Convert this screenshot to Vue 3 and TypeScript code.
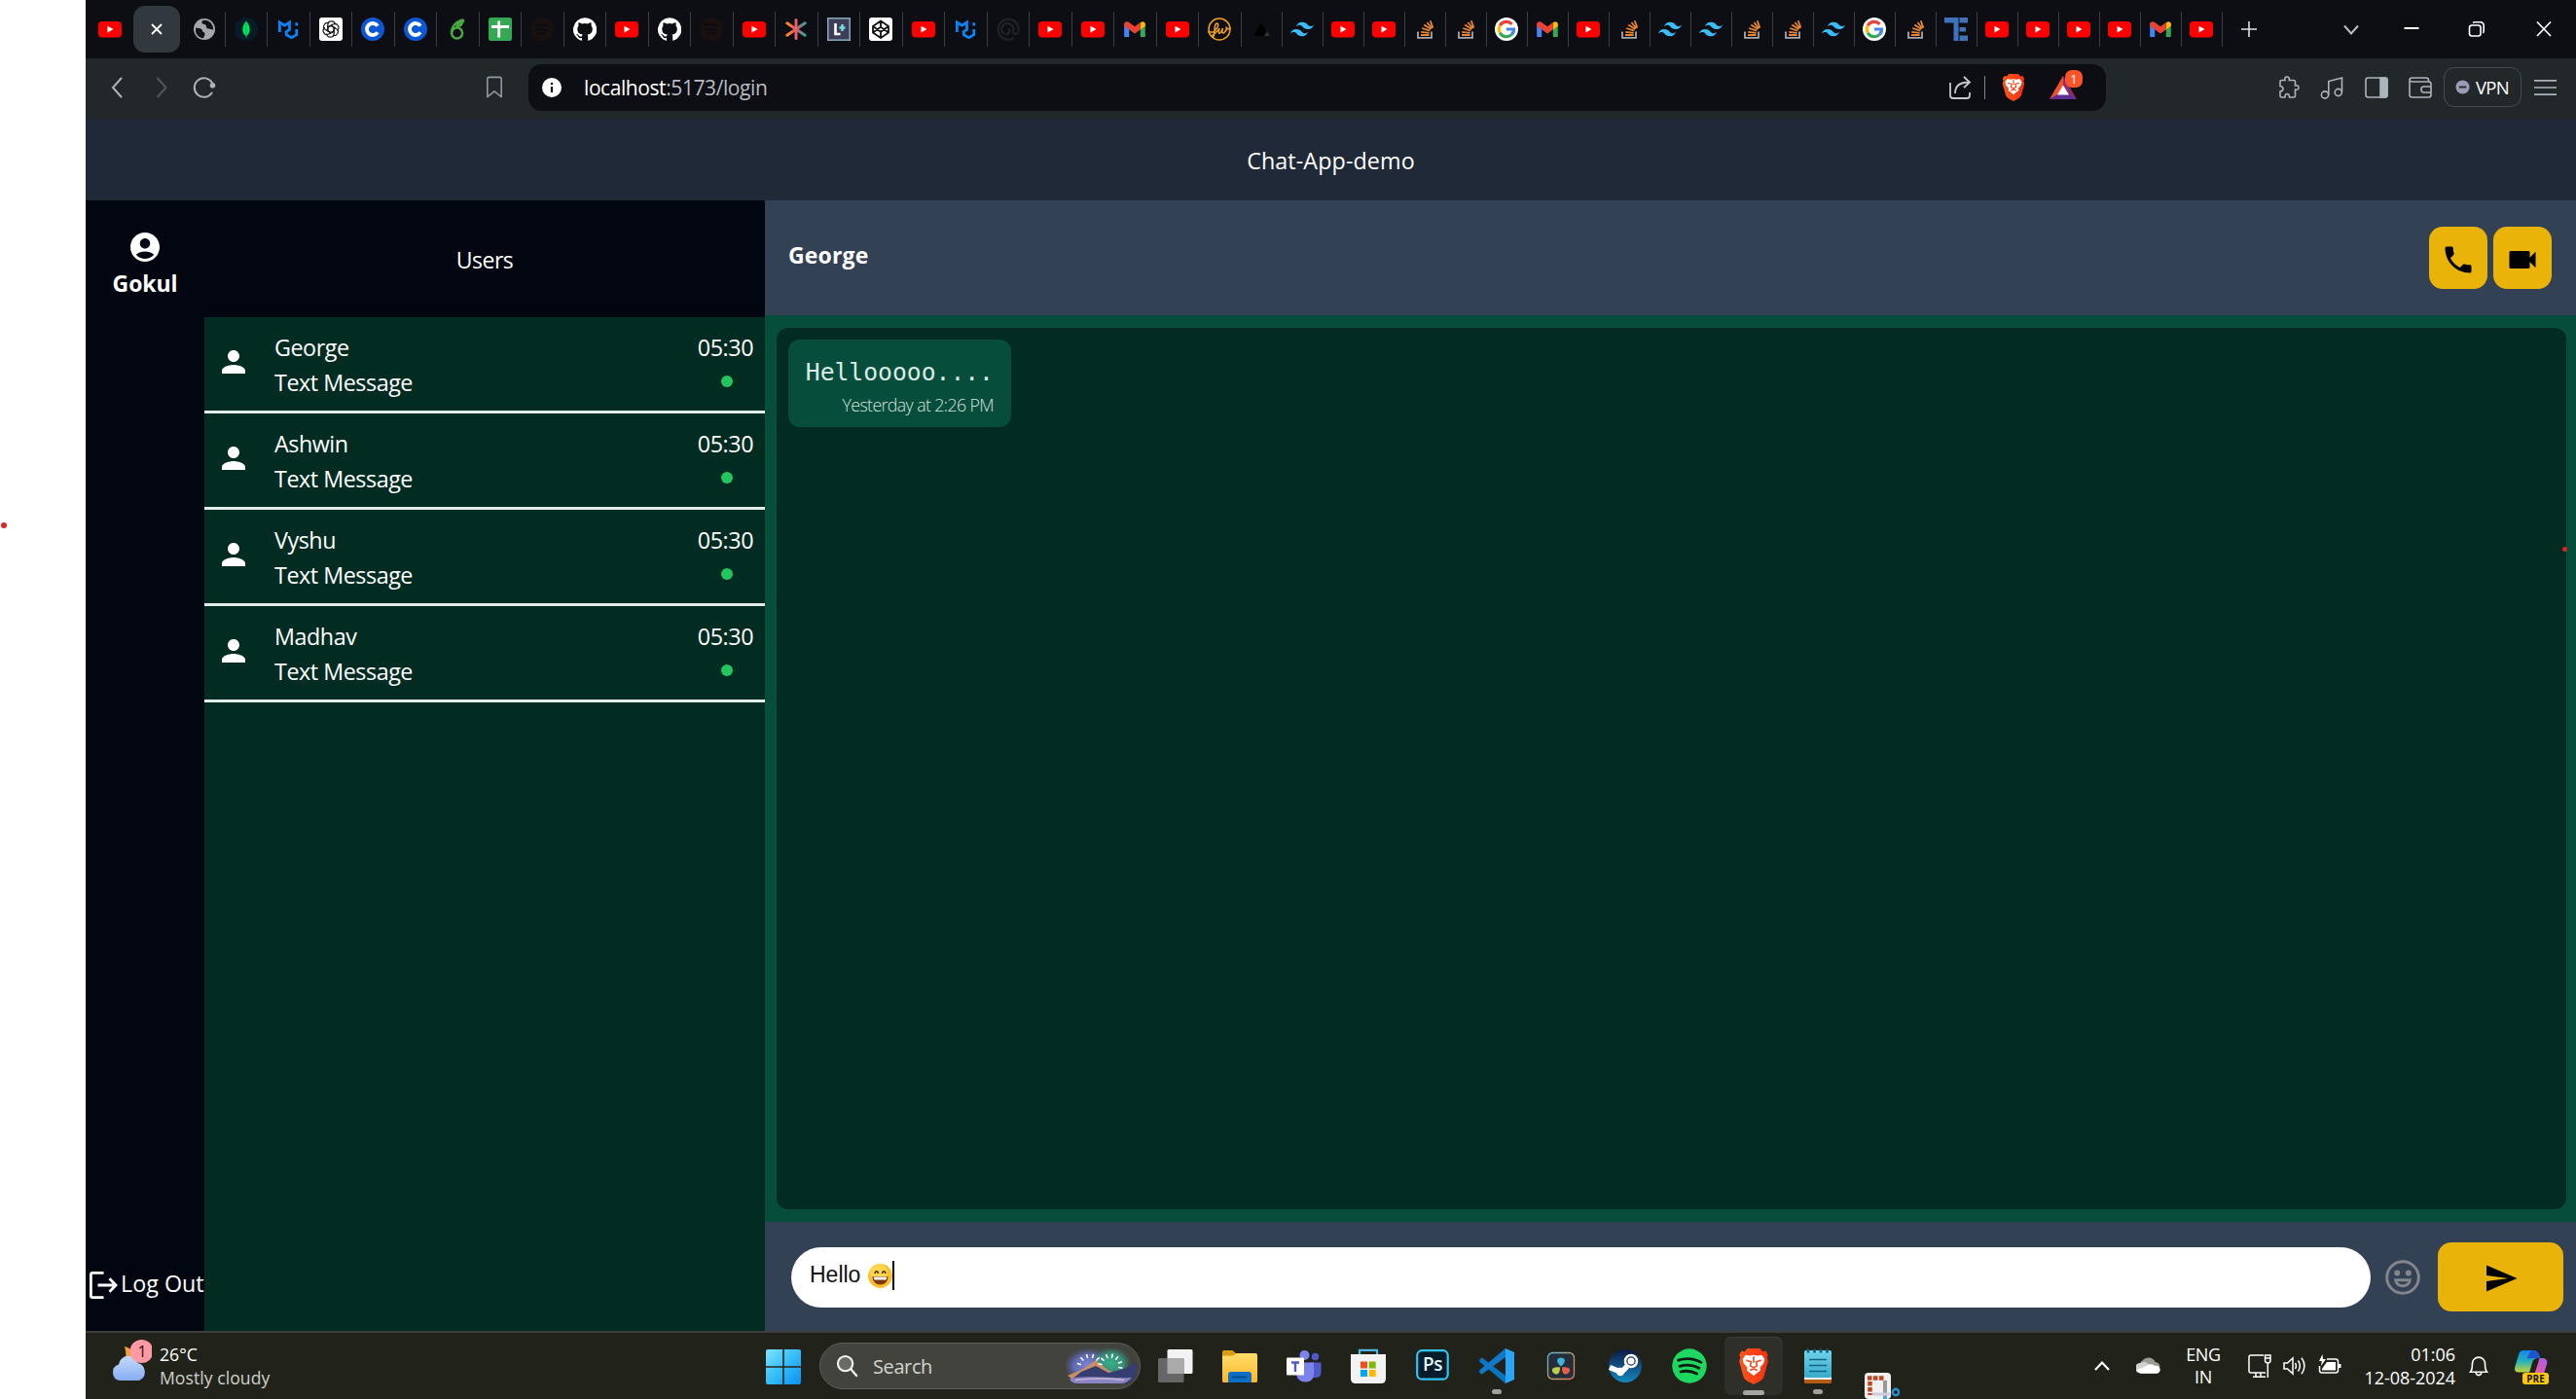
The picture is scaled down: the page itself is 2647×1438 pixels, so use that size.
<script setup lang="ts">
interface User {
  name: string
  message: string
  time: string
}

const wideTabs: string[] = [
  'mongo', 'mui', 'gpt', 'coursera', 'coursera', 'six', 'sheets', 'dim', 'github', 'yt', 'github', 'dim', 'yt',
  'spark', 'lplus', 'codepen', 'yt', 'mui', 'dimq', 'yt', 'yt', 'gmail', 'yt', 'fw',
]
const narrowTabs: string[] = [
  'vercel', 'tw', 'yt', 'yt', 'so', 'so', 'google', 'gmail', 'yt', 'so', 'tw', 'tw', 'so', 'so', 'tw', 'google', 'so',
  'te', 'yt', 'yt', 'yt', 'yt', 'gmail', 'yt',
]
const users: User[] = ['George', 'Ashwin', 'Vyshu', 'Madhav'].map((name) => ({
  name,
  message: 'Text Message',
  time: '05:30',
}))
const apps: { icon: string; state?: string; label?: string }[] = [
  { icon: 'taskview' }, { icon: 'explorer' }, { icon: 'teams' }, { icon: 'store' }, { icon: 'ps', label: 'Ps' },
  { icon: 'vscode', state: 'open' }, { icon: 'davinci' }, { icon: 'steam' }, { icon: 'spotify' },
  { icon: 'brave', state: 'active' }, { icon: 'notepad', state: 'open' }, { icon: 'snip' },
]
</script>

<template>
  <svg class="defs" width="0" height="0">
    <defs>
      <linearGradient id="gWin" x1="0" y1="0" x2="1" y2="1"><stop offset="0" stop-color="#7fe3ff" /><stop offset=".5" stop-color="#35bdf8" /><stop offset="1" stop-color="#0a90f5" /></linearGradient>
      <linearGradient id="gFold" x1="0" y1="0" x2="0" y2="1"><stop offset="0" stop-color="#ffdc6b" /><stop offset="1" stop-color="#fbb829" /></linearGradient>
      <linearGradient id="gBrave" x1="0" y1="0" x2="1" y2="0"><stop offset="0" stop-color="#f8571d" /><stop offset="1" stop-color="#f5300f" /></linearGradient>
      <linearGradient id="gSteam" x1="0" y1="0" x2="0" y2="1"><stop offset="0" stop-color="#0f1845" /><stop offset="1" stop-color="#1488bf" /></linearGradient>
      <linearGradient id="gNote" x1="0" y1="0" x2="0" y2="1"><stop offset="0" stop-color="#6fd3ea" /><stop offset="1" stop-color="#38aacb" /></linearGradient>
      <linearGradient id="gSpark" x1="0" y1="0" x2="1" y2="0"><stop offset="0" stop-color="#ff8a1e" /><stop offset=".5" stop-color="#e5506a" /><stop offset="1" stop-color="#35a7a0" /></linearGradient>
      <linearGradient id="gDav" x1="0" y1="0" x2="1" y2="1"><stop offset="0" stop-color="#57b9d6" /><stop offset=".5" stop-color="#b0a070" /><stop offset="1" stop-color="#e07a5c" /></linearGradient>
      <linearGradient id="gCloud" x1="0" y1="0" x2="0" y2="1"><stop offset="0" stop-color="#c5dafb" /><stop offset="1" stop-color="#86adf2" /></linearGradient>
      <linearGradient id="gCop1" x1="0" y1="0" x2="0" y2="1"><stop offset="0" stop-color="#1583ee" /><stop offset=".5" stop-color="#24b2b8" /><stop offset="1" stop-color="#c5d43a" /></linearGradient>
      <linearGradient id="gCop2" x1="1" y1="0" x2="0" y2="1"><stop offset="0" stop-color="#a35cf0" /><stop offset=".5" stop-color="#d65bb8" /><stop offset="1" stop-color="#ff7a5c" /></linearGradient>
      <radialGradient id="gBlue"><stop offset="0" stop-color="#7c86dc" /><stop offset=".6" stop-color="#666fc0" stop-opacity=".9" /><stop offset="1" stop-color="#565ca0" stop-opacity="0" /></radialGradient>
      <radialGradient id="gGreen"><stop offset="0" stop-color="#35b388" /><stop offset=".6" stop-color="#36937c" stop-opacity=".9" /><stop offset="1" stop-color="#3a6e68" stop-opacity="0" /></radialGradient>
    </defs>
    <symbol id="yt" viewBox="0 0 24 24"><rect y="4" width="24" height="16.4" rx="4" fill="#f00" /><path d="M9.500 8.800v6.600l6-3.300z" fill="#fff" /></symbol>
    <symbol id="globe" viewBox="0 0 24 24"><circle cx="12" cy="12" r="11" fill="#a3a6aa" /><path d="M3.500 10.500c4 .6 6.500 1.200 6.500 3s2.500 1 2.500 3.500-1.500 2.500-1.500 4.200C6 21 1.500 16 3.500 10.500zM11.500 2.800c-3.500 1-2.500 4 .5 4.200s1 3.500 3.500 4.500 3.500 0 5.700 1.300C21.500 7 17 2.300 11.500 2.800z" fill="#111217" /></symbol>
    <symbol id="mongo" viewBox="0 0 24 24"><circle cx="12" cy="12" r="12" fill="#071c26" /><path d="M12 3.500c5 6 4.500 12.500.4 15.500l-.1 2h-.6l-.1-2C7.400 16 7 9.500 12 3.500z" fill="#00e85d" /><path d="M12 4v15" stroke="#00a54a" stroke-width=".8" /></symbol>
    <symbol id="mui" viewBox="0 0 24 24"><path d="M3.400 15V5l5.100 3.200L13.500 5v7.500l-3.200 2v3.200l5.200 2.900 5.300-3v-5.500m0-3.600V5.300" fill="none" stroke="#0a84f5" stroke-width="2.800" /></symbol>
    <symbol id="gpt" viewBox="0 0 24 24"><rect width="24" height="24" rx="3" fill="#fff" /><g fill="none" stroke="#222" stroke-width="1.200"><path v-for="a in [0, 60, 120, 180, 240, 300]" :key="a" :transform="`rotate(${a} 12 12)`" d="M8.800 13.800V7.600c0-5 7.300-5 7.500-.2M8.800 10.200 12 8.300l5 2.900" /></g></symbol>
    <symbol id="coursera" viewBox="0 0 24 24"><circle cx="12" cy="12" r="12" fill="#0b57d6" /><path d="M17 8.700a6 6 0 1 0 0 6.600" fill="none" stroke="#fff" stroke-width="3.800" /></symbol>
    <symbol id="six" viewBox="0 0 24 24"><g fill="none" stroke="#48a943" stroke-width="2.500"><circle cx="11.600" cy="16" r="5.500" /><path d="M6 16C6 9 11 3.500 18.500 2.500M11 7.500l7.500-5-3 5.500-5 1.500" /></g></symbol>
    <symbol id="sheets" viewBox="0 0 24 24"><rect width="24" height="24" rx="2.500" fill="#34a853" /><path d="M10.700 3.500v17M3 9.500h18" stroke="#fff" stroke-width="2.800" /></symbol>
    <symbol id="dim" viewBox="0 0 24 24"><circle cx="12" cy="12" r="12" fill="#18110f" /><path d="M5 8c5-1.500 10-1 14 1M6 12.500c4-1 8-.8 12 1M7 16.500c3-.8 6-.5 9 1" fill="none" stroke="#0d0d11" stroke-width="2" /></symbol>
    <symbol id="dimq" viewBox="0 0 24 24"><path d="M18 21a10.500 10.500 0 1 1 4.500-6.500M8 17a6 6 0 1 1 9-3c-.5 2.500 2 4 5 2M9 17.500c4 0 5-3.500 3.500-6.500" fill="none" stroke="#23242b" stroke-width="2" /></symbol>
    <symbol id="github" viewBox="0 0 24 24"><path d="M12 .3a12 12 0 0 0-3.800 23.400c.6.100.8-.3.800-.6v-2c-3.300.7-4-1.600-4-1.600-.6-1.400-1.400-1.800-1.400-1.800-1-.7.1-.7.1-.7 1.200.1 1.900 1.200 1.900 1.200 1 1.800 2.800 1.300 3.500 1 .1-.8.400-1.300.7-1.600-2.700-.3-5.500-1.300-5.500-6 0-1.200.5-2.300 1.300-3.100-.2-.4-.6-1.600 0-3.200 0 0 1-.3 3.400 1.200a11.500 11.500 0 0 1 6 0c2.300-1.500 3.300-1.200 3.300-1.200.7 1.600.3 2.800.2 3.200.8.800 1.300 1.900 1.300 3.200 0 4.600-2.800 5.600-5.500 5.900.5.400.9 1.100.9 2.200v3.300c0 .3.100.7.800.6A12 12 0 0 0 12 .3" fill="#fff" /></symbol>
    <symbol id="spark" viewBox="0 0 24 24"><path d="M2.800 5.800l18.400 12.400M21.200 5.800 2.800 18.200" stroke="url(#gSpark)" stroke-width="3" stroke-linecap="round" /><path d="M12 2.500v19" stroke="#e4606a" stroke-width="3" stroke-linecap="round" /></symbol>
    <symbol id="lplus" viewBox="0 0 24 24"><rect x=".8" y=".8" width="22.400" height="22.400" fill="#3e3d59" stroke="#7fa6b4" stroke-width="1.600" /><path d="M8.500 6v11h5" fill="none" stroke="#fff" stroke-width="2.600" /><path d="M15.500 7v7M12.500 10.500h6" stroke="#72dede" stroke-width="2.400" /></symbol>
    <symbol id="codepen" viewBox="0 0 24 24"><rect width="24" height="24" rx="3" fill="#fff" /><path d="M12 3.500 20 9v6.500L12 21l-8-5.500V9zM4 9l8 5.800L20 9M4 15.500l8-5.700 8 5.700M12 3.500v6.300M12 21v-6.200" fill="none" stroke="#111" stroke-width="1.800" stroke-linejoin="round" /></symbol>
    <symbol id="gmail" viewBox="0 0 24 24"><path d="M1.200 20V6l5 3.600V20z" fill="#4285f4" /><path d="M22.800 20V6l-5 3.600V20z" fill="#34a853" /><path d="M17.800 5.300 20 4.200q2.800 0 2.800 3v1.500l-5 3.800z" fill="#fbbc04" /><path d="M1.200 8.700V7c0-3 3-3.600 5-2L12 9.200l5.800-4.200v7.400L12 16.600z" fill="#ea4335" /></symbol>
    <symbol id="fw" viewBox="0 0 24 24"><g fill="none" stroke="#f0a11e" stroke-width="1.500"><circle cx="12" cy="12" r="11" /><path d="M0 15h5.500c3-2 6-6 5-8.500-1-1.500-3 0-3.200 3L6.500 18c-.3 2.500-2.500 2-1.500.5 1.500-2 5-3.500 7-7.500-1.500 5-.5 6 1.500 4.500l2-4.500c-1.500 5 0 6 2 4s2.500-3.500 1.500-5.500c0 2.500 2 3 4.500 1.500" /></g></symbol>
    <symbol id="vercel" viewBox="0 0 24 24"><path d="m12 5 8 14H4z" fill="#000" /><path d="m18 14 3 5h-6z" fill="#333" /></symbol>
    <symbol id="tw" viewBox="0 0 24 24"><path d="M12 4.800c-3.200 0-5.200 1.600-6 4.800 1.200-1.600 2.600-2.200 4.200-1.800.9.200 1.600.9 2.300 1.700C13.700 10.700 15 12 18 12c3.200 0 5.200-1.600 6-4.800-1.200 1.600-2.600 2.200-4.200 1.800-.9-.2-1.600-.9-2.300-1.700C16.300 6.100 15 4.800 12 4.800zM6 12c-3.200 0-5.200 1.600-6 4.800 1.200-1.600 2.600-2.200 4.200-1.800.9.200 1.600.9 2.300 1.700C7.700 17.900 9 19.200 12 19.200c3.200 0 5.200-1.600 6-4.800-1.200 1.600-2.600 2.200-4.200 1.800-.9-.2-1.600-.9-2.300-1.700C10.300 13.300 9 12 6 12z" fill="#38bdf8" /></symbol>
    <symbol id="so" viewBox="0 0 24 24"><path d="M5 14.500v6.300h14v-6.300" fill="none" stroke="#a5a9ad" stroke-width="1.800" /><path d="M8 18h8.500M8.200 14.800l8.400 1M9.200 11l8 2.600M11.300 7.400l7 4.700M14.400 5l5 6.300M17.700 3.200l2.700 7.400" stroke="#e8852e" stroke-width="1.800" /></symbol>
    <symbol id="google" viewBox="0 0 24 24"><circle cx="12" cy="12" r="12" fill="#fff" /><g fill="none" stroke-width="3.200"><path d="M5.300 8.300A7.600 7.600 0 0 1 17.500 6.800" stroke="#ea4335" /><path d="M5.300 8.300a7.800 7.800 0 0 0 0 7.400" stroke="#fbbc04" /><path d="M5.300 15.700a7.600 7.600 0 0 0 11.900 2" stroke="#34a853" /><path d="M17.200 17.700c1.700-1.600 2.400-3.600 2.300-5.700H12" stroke="#4285f4" /></g></symbol>
    <symbol id="te" viewBox="0 0 24 24"><path d="M0 0h14.500v5.500H0zM9.500 0h5v24h-5zM15.500 0H24v5.500h-8.500zM15.500 10H22v4.500h-6.500zM15.500 18.500H24V24h-8.500z" fill="#3f72b8" /></symbol>
    <symbol id="brave" viewBox="0 0 24 28.800"><path d="M7 0h10l2.200 2.600 2.500-.6 1.800 3.200-.8 2.200.9 2.800-3.300 12c-.7 2.500-2 3.500-8.300 6.600C5.700 25.700 4.400 24.700 3.700 22.200L.4 10.200l.9-2.800-.8-2.200L2.300 2l2.500.6z" fill="url(#gBrave)" /><path d="m12 5.300 3 .6 3.500-.7 2.300 3.300-.8 3.300-3 3.500.6 2.300-2.600 1.800L12 21.800 9 19.400l-2.600-1.800.6-2.300-3-3.500-.8-3.300 2.300-3.300 3.500.7z" fill="#fff" /><path d="M6 9.500l4 1.200-.7 3.200 2.700 1.600 2.700-1.600-.7-3.200 4-1.200M12 6.500v5M9 17.500l3-1.200 3 1.200" fill="none" stroke="#f4451a" stroke-width="1.200" /></symbol>
    <symbol id="taskview" viewBox="0 0 36 36"><rect x="9.500" y="1" width="26" height="25" rx="1.500" fill="#f2f2f2" /><rect y="10" width="26.500" height="25" rx="1.500" fill="#666" /><path d="M9.500 10h17v16h-17z" fill="#aaa" /></symbol>
    <symbol id="explorer" viewBox="0 0 36 36"><path d="M0 5.500v-2Q0 2 1.500 2h9l4 3.500V8H0z" fill="#d99c12" /><path d="M0 7.500h11L14.500 5H34q2 0 2 2v26.500q0 1.500-1.500 1.500H1.500Q0 35 0 33.500z" fill="url(#gFold)" /><path d="M6 35v-8q0-3 3-3h18q3 0 3 3v8z" fill="#0c6ec4" /><path d="M10 29.500h15" stroke="#094b8a" stroke-width="2" /></symbol>
    <symbol id="teams" viewBox="0 0 36 36"><circle cx="18.500" cy="7" r="5" fill="#7b83eb" /><circle cx="29.500" cy="8.500" r="3.700" fill="#5059c9" /><path d="M24 14.500h11.500V25q0 5-5.500 5h-6z" fill="#5059c9" /><path d="M10 14.500h18V26q0 8.500-8.500 8.500T10 26z" fill="#7b83eb" /><rect y="9.500" width="18" height="18" rx="1" fill="#fff" /><path d="M5 14.500h8M9 14.500V24" stroke="#5059c9" stroke-width="2.400" /></symbol>
    <symbol id="store" viewBox="0 0 36 36"><path d="M9 7V1.800h18V7" fill="none" stroke="#4fb6dd" stroke-width="2.200" /><path d="M0 6h36v25q0 5-5 5H5q-5 0-5-5z" fill="#f3f3f3" /><path d="M10 13.500h7v7h-7z" fill="#f25022" /><path d="M18.700 13.500h7v7h-7z" fill="#7fba00" /><path d="M10 22h7v7h-7z" fill="#00a4ef" /><path d="M18.700 22h7v7h-7z" fill="#ffb900" /></symbol>
    <symbol id="ps" viewBox="0 0 36 36"><rect x="2.200" y="2.200" width="31.500" height="29.500" rx="5" fill="#071d2b" stroke="#31c5f0" stroke-width="2.200" /></symbol>
    <symbol id="vscode" viewBox="0 0 36 36"><path d="M0 12.500Q.2 10.500 3 9.500L27 28v8L.7 14z" fill="#0b74c0" /><path d="M0 23.500q.5 2.500 3 3L27 9V0L.7 22z" fill="#1079c8" /><path d="M27 0l9 4v28l-9 4z" fill="#2aa6f4" /></symbol>
    <symbol id="davinci" viewBox="0 0 36 36"><rect x="4.500" y="4.500" width="27" height="27" rx="5" fill="#252d38" stroke="url(#gDav)" stroke-width="1.300" /><path d="M18 18.500c-7-6-3-9 0-9s7 3 0 9z" fill="#3fb3dd" /><path d="M17 19.500c0 9-5 7.500-7 5.500s-2-7 7-5.500z" fill="#b9d14a" /><path d="M19 19.500c0 9 5 7.500 7 5.500s2-7-7-5.500z" fill="#e4604a" /></symbol>
    <symbol id="steam" viewBox="0 0 36 36"><circle cx="18" cy="18" r="17" fill="url(#gSteam)" /><path d="m2 19.500 12 5 6-6" stroke="#fff" stroke-width="5.500" fill="none" /><circle cx="24" cy="13" r="6" fill="#1b2a5c" stroke="#fff" stroke-width="2.500" /><circle cx="24" cy="13" r="3.500" fill="#fff" /><circle cx="13" cy="24" r="4.200" fill="#fff" /></symbol>
    <symbol id="spotify" viewBox="0 0 36 36"><circle cx="18" cy="18" r="17.700" fill="#1ed760" /><path d="M6.500 12.200c8-2.400 17-1.500 23.500 2.200M8 18.300c7-2 14.300-1.200 20 2M9 24c6-1.500 11.500-.8 16.500 2" fill="none" stroke="#0d1a10" stroke-width="2.800" stroke-linecap="round" /></symbol>
    <symbol id="notepad" viewBox="0 0 36 36"><path d="M4 31h28v3.500q0 1.500-1.500 1.500h-25Q4 36 4 34.500z" fill="#b55c14" /><path d="M4 27h28v5H4z" fill="#f4f4f0" /><rect x="4" y="2" width="28" height="28" rx="1.500" fill="url(#gNote)" /><path d="M8 .5v4M14.500 .5v4M21 .5v4M27.500 .5v4" stroke="#155d78" stroke-width="2.600" /><path d="M9 11.500h18M9 17.500h18M9 23.500h18" stroke="#156485" stroke-width="1.700" /></symbol>
    <symbol id="snip" viewBox="0 0 36 28"><rect x="0" y="0" width="27" height="27" rx="4" fill="#f1f1f1" /><path d="M3 5.500h17M5.500 9v14" stroke="#c2441c" stroke-width="4.500" stroke-dasharray="4.500 1.500" /><path d="M21 8v20" stroke="#999" stroke-width="4" /><path d="M8 22h18" stroke="#ccd" stroke-width="3" /><circle cx="32" cy="20" r="3.200" fill="none" stroke="#2494d8" stroke-width="2.400" /><path d="M21 24v4" stroke="#4aa5dc" stroke-width="4" /></symbol>
  </svg>

  <div class="page">
    <i class="speck left-speck"></i>
    <i class="speck right-speck"></i>
    <div class="window">
      <div class="tabstrip">
        <div class="tab first"><svg class="fav"><use href="#yt" /></svg></div>
        <div class="tab active"><svg width="12" height="12" viewBox="0 0 12 12"><path d="m1 1 10 10M11 1 1 11" stroke="#fff" stroke-width="1.800" /></svg></div>
        <div class="tab globe"><svg class="fav"><use href="#globe" /></svg></div>
        <div v-for="(t, i) in wideTabs" :key="'w' + i" class="tab wide"><svg class="fav"><use :href="'#' + t" /></svg></div>
        <div v-for="(t, i) in narrowTabs" :key="'n' + i" class="tab narrow"><svg class="fav"><use :href="'#' + t" /></svg></div>
        <div class="newtab"><svg width="16" height="16" viewBox="0 0 16 16"><path d="M8 0v16M0 8h16" stroke="#dfe2e5" stroke-width="1.600" /></svg></div>
        <div class="controls">
          <svg viewBox="0 0 20 20"><path d="m3 6.500 7 8 7-8" fill="none" stroke="#b9bec3" stroke-width="2" /></svg>
          <svg class="min" viewBox="0 0 20 20"><path d="M2.500 9h15" stroke="#fff" stroke-width="2" /></svg>
          <svg class="restore" viewBox="0 0 20 20" fill="none" stroke="#fff" stroke-width="1.600"><rect x="2.500" y="6" width="11.500" height="11" rx="2.500" /><path d="M6 3.500Q7 2.800 8 2.800h5.500q3.700 0 3.700 3.700v5q0 1.500-.7 2.500" /></svg>
          <svg class="close" viewBox="0 0 20 20"><path d="m3 2.500 14 14.500M17 2.500 3 17" stroke="#fff" stroke-width="1.700" /></svg>
        </div>
      </div>

      <div class="toolbar">
        <div class="nav">
          <svg viewBox="0 0 24 24"><path d="M16.500 2.500 8 12l8.500 9.500" fill="none" stroke="#a9b4bc" stroke-width="2" stroke-linecap="round" /></svg>
          <svg viewBox="0 0 24 24"><path d="m9 2.500 8.500 9.500L9 21.500" fill="none" stroke="#4f575d" stroke-width="2" stroke-linecap="round" /></svg>
          <svg viewBox="0 0 24 24"><path d="M19.700 17.500A9.800 9.800 0 1 1 20 7" fill="none" stroke="#a9b4bc" stroke-width="2" stroke-linecap="round" /><circle cx="20.500" cy="9.700" r="2.800" fill="#a9b4bc" /></svg>
        </div>
        <svg class="bookmark" viewBox="0 0 18 24"><path d="M1.500 3.500q0-2 2-2h11q2 0 2 2v19L9 16.500l-7.500 6z" fill="none" stroke="#8d99a1" stroke-width="1.700" stroke-linejoin="round" /></svg>
        <div class="urlbar">
          <svg class="info" viewBox="0 0 20 20"><circle cx="10" cy="10" r="10" fill="#fff" /><path d="M10 9v6" stroke="#0d0e13" stroke-width="2.200" /><circle cx="10" cy="6" r="1.300" fill="#0d0e13" /></svg>
          <span class="url"><b>localhost</b>:5173/login</span>
          <svg class="share" viewBox="0 0 24 24" fill="none" stroke="#c4c9cd" stroke-width="1.800"><path d="M2 7v13q0 3 3 3h14q3 0 3-3v-3M7 18c0-7 4.500-11.500 14-11.500M16 1l6 5.500-6 5.500" /></svg>
          <i class="bar"></i>
          <svg class="shield" viewBox="0 0 24 28.800"><use href="#brave" /></svg>
          <div class="bat">
            <svg viewBox="0 0 28 24"><path d="M14 0 0 24l14-7z" fill="#f5502c" /><path d="m14 0 14 24-14-7z" fill="#8c2a6f" /><path d="M0 24h28l-8-5H8z" fill="#5f2f94" /><path d="m14 9.500 6 10H8z" fill="#fff" /></svg>
            <span>1</span>
          </div>
        </div>
        <div class="tools">
          <svg viewBox="0 0 24 24"><path d="M5 4.500h4q-1-3.500 2-3.500t2.200 3.500H18q1.500 0 1.500 1.500v4q3.500-.8 3.500 2t-3.500 2v6.500q0 1.500-1.500 1.500h-4.500q0-3.500-2.300-3.500T9 22H5.500Q4 22 4 20.500V16q3-.5 3-2.800T4 10.500V6q0-1.500 1-1.500z" /></svg>
          <svg viewBox="0 0 24 24"><path d="M8.800 19.500V5.500L22.500 2v14.500" /><circle cx="5" cy="19.500" r="3.600" /><circle cx="18.800" cy="17" r="3.600" /></svg>
          <svg viewBox="0 0 24 24"><rect x="1" y="2" width="22" height="20" rx="2.500" /><path d="M16 2h5q2 0 2 2v16q0 2-2 2h-5z" fill="#aab5bc" /></svg>
          <svg viewBox="0 0 24 24"><path d="M20.500 6V4.500Q20.500 2 18 2H3.500Q1 2 1 4.500v15Q1 22 3.500 22h17q2.500 0 2.500-2.500V8.500Q23 6 20.500 6H4Q1 6 1 4M23 11h-7.500q-2.500 0-2.500 3t2.500 3H23" /></svg>
        </div>
        <div class="vpn"><svg viewBox="0 0 16 16"><circle cx="8" cy="8" r="7.500" fill="#9a9bb4" /><path d="M4 8h8" stroke="#22272a" stroke-width="2" /></svg><span>VPN</span></div>
        <svg class="menu" viewBox="0 0 24 18"><path d="M0 1.500h24M0 9h24M0 16.500h24" stroke="#a9b4bc" stroke-width="1.700" /></svg>
      </div>

      <header class="app-title">Chat-App-demo</header>

      <main class="app">
        <aside class="rail">
          <div class="me">
            <svg width="36" height="36" viewBox="0 0 24 24"><path d="M12 2C6.480 2 2 6.480 2 12s4.480 10 10 10 10-4.480 10-10S17.520 2 12 2zm0 4c1.930 0 3.500 1.570 3.500 3.500S13.930 13 12 13s-3.500-1.570-3.500-3.500S10.070 6 12 6zm0 14c-2.030 0-4.430-.82-6.140-2.880C7.550 15.800 9.680 15 12 15s4.450.8 6.140 2.120C16.430 19.180 14.030 20 12 20z" fill="#fff" /></svg>
            <b>Gokul</b>
          </div>
          <div class="logout">
            <svg width="30" height="30" viewBox="0 0 30 30" fill="none" stroke="#fff" stroke-width="2.800"><path d="M15.500 2.400H4.200Q2.400 2.400 2.400 4.200v21.600q0 1.800 1.800 1.800h11.300M9.500 15h18M21.500 8.300l6.500 6.700-6.500 6.700" /></svg>
            <span>Log Out</span>
          </div>
        </aside>

        <section class="users">
          <div class="users-head"><span>Users</span></div>
          <div v-for="u in users" :key="u.name" class="user">
            <svg width="36" height="36" viewBox="0 0 24 24"><path d="M12 12c2.210 0 4-1.790 4-4s-1.790-4-4-4-4 1.790-4 4 1.790 4 4 4zm0 2c-2.670 0-8 1.340-8 4v2h16v-2c0-2.660-5.330-4-8-4z" fill="#fff" /></svg>
            <div class="who"><span class="name">{{ u.name }}</span><span class="msg">{{ u.message }}</span></div>
            <div class="meta"><span>{{ u.time }}</span><i></i></div>
          </div>
        </section>

        <section class="chat">
          <div class="chat-head">
            <b>George</b>
            <div class="calls">
              <button><svg width="36" height="36" viewBox="0 0 24 24"><path d="M6.620 10.790c1.440 2.830 3.760 5.140 6.590 6.590l2.200-2.200c.27-.27.67-.36 1.020-.24 1.120.37 2.330.57 3.570.57.55 0 1 .45 1 1V20c0 .55-.45 1-1 1-9.390 0-17-7.610-17-17 0-.55.45-1 1-1h3.500c.55 0 1 .45 1 1 0 1.250.2 2.450.57 3.570.11.35.03.74-.25 1.020l-2.200 2.200z" /></svg></button>
              <button><svg width="36" height="36" viewBox="0 0 24 24"><path d="M17 10.500V7c0-.55-.45-1-1-1H4c-.55 0-1 .45-1 1v10c0 .55.45 1 1 1h12c.55 0 1-.45 1-1v-3.500l4 4v-11l-4 4z" /></svg></button>
            </div>
          </div>
          <div class="thread">
            <div class="log">
              <div class="bubble"><p>Hellooooo....</p><time>Yesterday at 2:26 PM</time></div>
            </div>
          </div>
          <div class="composer">
            <div class="input">
              <span>Hello</span>
              <svg width="27" height="27" viewBox="0 0 27 27"><circle cx="13.500" cy="13.500" r="12.500" fill="#fbc02d" /><circle cx="12" cy="10" r="9" fill="#ffd64d" /><path d="M5.500 14h16c0 5.500-3.500 8.500-8 8.500s-8-3-8-8.500z" fill="#7a3b0c" /><path d="M6.500 14.500h14l-1 3h-12z" fill="#fff" /><path d="M8 11c.5-3 3-3 3.500 0M15.500 11c.5-3 3-3 3.500 0" fill="none" stroke="#5b3210" stroke-width="1.700" /></svg>
              <i></i>
            </div>
            <svg class="smile" viewBox="0 0 36 36" fill="none" stroke="#84868c" stroke-width="2.900"><circle cx="18" cy="18" r="16.300" /><g fill="#84868c" stroke="none"><circle cx="12.200" cy="13.500" r="3" /><circle cx="23.800" cy="13.500" r="3" /></g><path d="M10.700 20.800h14.600c-1 8-13.600 8-14.600 0z" /></svg>
            <button class="send"><svg width="36" height="36" viewBox="0 0 24 24"><path d="M2.010 21 23 12 2.010 3 2 10l15 2-15 2z" /></svg></button>
          </div>
        </section>
      </main>

      <footer class="taskbar">
        <div class="weather">
          <svg width="44" height="46" viewBox="0 0 44 46"><path d="M16 8c4 14-1 22-12 22 4 5 11 7 17 4s8-9 6-16c-3-6-6-9-11-10z" fill="#f2a02f" /><path d="M11 43a8.500 8.500 0 0 1-1-16.500A10 10 0 0 1 29.500 25 9.500 9.500 0 0 1 31 43z" fill="url(#gCloud)" /><circle cx="33.500" cy="13" r="12" fill="#ff99a4" /></svg>
          <em>1</em>
          <div class="wtext"><span>26°C</span><span>Mostly cloudy</span></div>
        </div>
        <div class="center">
          <svg class="win" viewBox="0 0 36 36"><path d="M0 2q0-2 2-2h15.200v17.200H0zM18.800 0H34q2 0 2 2v15.200H18.800zM0 18.800h17.200V36H2q-2 0-2-2zM18.800 18.800H36V34q0 2-2 2H18.800z" fill="url(#gWin)" /></svg>
          <div class="search">
            <svg class="mag" viewBox="0 0 24 24"><circle cx="10" cy="9.500" r="8" fill="#6b6b66" stroke="#f1f1f1" stroke-width="2.200" /><path d="m16 15.500 6 7" stroke="#f1f1f1" stroke-width="2.400" stroke-linecap="round" /></svg>
            <span>Search</span>
            <svg class="works" viewBox="0 0 74 36"><ellipse cx="24" cy="18" rx="26" ry="19" fill="url(#gBlue)" /><ellipse cx="47" cy="15" rx="21" ry="17" fill="url(#gGreen)" /><path d="M2 28 18 21 31 12l12 10 8 3 7-4-14 10H6z" fill="#c98f62" /><path d="M5 33 16 24 31 18l13 7 16-4 13-7v8q-1 12-10 14H12Q7 36 5 33z" fill="#363d70" /><path d="M5 33q-2-3 3-2.500c20-3 45 1 60-.5-4 4-7 6-11 6H12q-5 0-7-3z" fill="#8c85c4" /><path d="M10 32.500q25-3 50 0" stroke="#c9b7dc" stroke-width="1.500" fill="none" /><g stroke="#fff" stroke-width="1.600" stroke-linecap="round" stroke-dasharray="3 20"><path v-for="a in [-75, -45, -15, 15, 45]" :key="'l' + a" :transform="`rotate(${a} 25 19)`" d="M25 6v5" /><path v-for="a in [-80, -50, -20, 10, 40, 70, 100]" :key="'r' + a" :transform="`rotate(${a} 46 18)`" d="M46 6v5" /></g></svg>
          </div>
          <div class="apps">
            <div v-for="a in apps" :key="a.icon" class="cell" :class="[a.state, a.icon]"><svg><use :href="'#' + a.icon" /></svg><span v-if="a.label">{{ a.label }}</span></div>
          </div>
        </div>
        <div class="tray">
          <svg class="up" viewBox="0 0 18 12"><path d="m2 10 7-7.500 7 7.500" fill="none" stroke="#fff" stroke-width="2.200" /></svg>
          <svg class="cloud" viewBox="0 0 25 17"><path d="M5 12a6 6 0 0 1 2-9C10-1 18-.5 19.500 5c3 .5 5 2 5 5.500z" fill="#9b9b98" /><path d="M4 16.500A4.500 4.500 0 0 1 4.500 6C8 4 11 5 14 8l8 8.500z" fill="#d0d0ce" /><path d="M4.500 16.800Q1.500 16 .8 13L14 7.500q2.500-.8 4.800 1.200 5.700-.5 5.900 4.300-.3 3.600-4 3.800z" fill="#fff" /></svg>
          <div class="lang"><span>ENG</span><span>IN</span></div>
          <svg class="net" viewBox="0 0 24 24" fill="none" stroke="#fff" stroke-width="1.500"><path d="M16 1H3Q1 1 1 3v14q0 2 2 2h15M8 19v4M13 19v4M5 23.200h13M17.500 1h5.500v5q0 3-2.700 3t-2.800-3zM20.300 9v15M17.500 4h5.500" /></svg>
          <svg class="vol" viewBox="0 0 24 20" fill="none" stroke="#fff" stroke-width="1.500"><path d="M1 7h3.500L10 2v16l-5.500-5H1zM12.500 7q1.800 3 0 6M15.500 4.500q3.600 5.500 0 11M19 1.800q5.800 8.200 0 16.400" /></svg>
          <svg class="batt" viewBox="0 0 24 20" fill="none" stroke="#fff" stroke-width="1.500"><path d="M9 5h9q2.500 0 2.500 2.500v9Q20.500 19 18 19H4q-2.500 0-2.500-2.500V12" /><path d="M4 15l5-7h9v8.500H4zM21 10h2.500v4H21zM4.500 0 1 7h2.800L3 12l5-7H5z" fill="#fff" stroke="none" /></svg>
          <div class="clock"><span>01:06</span><span>12-08-2024</span></div>
          <svg class="bell" viewBox="0 0 20 24" fill="none" stroke="#fff" stroke-width="1.700"><path d="M1.200 19c2-2.500 2-4 2-9a6.800 6.800 0 0 1 13.600 0c0 5 0 6.500 2 9zM7 19.500q.5 3 3 3t3-3" /></svg>
          <div class="copilot">
            <svg viewBox="0 0 36 34"><path d="M9 1h12q4 0 5.500 5l1 3.500Q21 9 19.500 13L16 25H4Q-1.500 25 .5 18L4.500 5Q6 1 9 1z" fill="url(#gCop1)" /><path d="M13 10 18 1h3q4 0 5.500 5l1 3.500h-5z" fill="#1c56cf" /><path d="M27 9.500h4q5.500.5 4 7l-3.500 11q-1.500 4-6 4.500h-8q3-1 4-5l4-12q1-4 1.500-5.500z" fill="url(#gCop2)" /></svg>
            <b>PRE</b>
          </div>
        </div>
      </footer>
    </div>
  </div>
</template>

<style>
body { background: #fff; }
</style>

<style scoped>
.defs { position: absolute; }
.page { position: relative; width: 2647px; height: 1438px; overflow: hidden; padding-left: 88px; box-sizing: border-box; background: #fff; font-family: "Open Sans", "Noto Sans", sans-serif; }
.page svg { display: block; flex: none; }
.window { width: 2559px; height: 1438px; display: flex; flex-direction: column; color: #fff; }
.speck { position: absolute; width: 6px; height: 6px; border-radius: 50%; background: #d92525; }
.left-speck { left: 1px; top: 537px; }
.right-speck { right: 9px; top: 562px; width: 5px; height: 5px; }

.tabstrip { height: 60px; flex: none; background: #0d0e13; display: flex; align-items: center; }
.tab { height: 36px; display: flex; align-items: center; justify-content: center; box-sizing: border-box; flex: none; }
.fav { width: 24px; height: 24px; }
.first { width: 49px; }
.active { width: 48px; height: 48px; border-radius: 12px; background: #31393e; }
.globe { width: 46.500px; padding-left: 4px; border-right: 1px solid #3a3c40; }
.wide { width: 43.500px; border-right: 1px solid #3a3c40; }
.narrow { width: 42px; border-right: 1px solid #3a3c40; }
.newtab { width: 54px; display: flex; justify-content: center; }
.controls { margin-left: auto; width: 241px; display: flex; justify-content: space-between; padding-right: 23px; box-sizing: border-box; }
.controls svg { width: 20px; height: 20px; }
.controls .min { margin: 0 4px 0 -4px; }
.controls .restore { margin: 0 3px 0 -3px; }

.toolbar { height: 63px; flex: none; background: #22272a; display: flex; align-items: center; box-sizing: border-box; padding-bottom: 3px; border-bottom: 1px solid #23263a; }
.nav { display: flex; gap: 21px; margin-left: 20px; }
.nav svg { width: 24px; height: 24px; }
.bookmark { width: 18px; height: 23px; margin-left: 277px; }
.urlbar { width: 1621px; height: 48px; margin-left: 26px; border-radius: 14px; background: #0d0e13; display: flex; align-items: center; flex: none; }
.info { width: 20px; height: 20px; margin-left: 14px; }
.url { margin-left: 23px; width: 200px; font-size: 21px; letter-spacing: -.42px; color: #b6bcc2; white-space: nowrap; margin-top: 1px; }
.url b { font-weight: 400; color: #fff; }
.share { width: 24px; height: 24px; margin-left: 1202px; }
.bar { width: 1px; height: 24px; background: #80858a; margin-left: 13px; }
.shield { width: 24px; height: 28px; margin-left: 17px; }
.bat { position: relative; margin-left: 25px; }
.bat svg { width: 28px; height: 24px; }
.bat span { position: absolute; left: 16px; top: -6px; width: 18px; height: 18px; border-radius: 7px; background: #fb542b; color: #fff; font-size: 13px; line-height: 18px; text-align: center; }
.tools { display: flex; gap: 21.300px; margin-left: 175px; }
.tools svg { width: 24px; height: 24px; fill: none; stroke: #aab5bc; stroke-width: 1.600; }
.vpn { margin-left: 12px; width: 80px; height: 41px; box-sizing: border-box; border: 1px solid #454c50; border-radius: 11px; display: flex; align-items: center; }
.vpn svg { width: 15px; height: 15px; margin-left: 11px; }
.vpn span { margin-left: 6px; font-size: 18.500px; letter-spacing: -.6px; }
.menu { width: 23px; height: 18px; margin-left: 13px; }

.app-title { height: 83px; flex: none; background: #1f2937; text-align: center; font-size: 23.300px; line-height: 84px; letter-spacing: .1px; }
.app { height: 1162px; flex: none; display: flex; }
.rail { width: 122px; background: #020610; display: flex; flex-direction: column; justify-content: space-between; }
.me { padding-top: 30px; display: flex; flex-direction: column; align-items: center; }
.me b { font-size: 23px; line-height: 30px; margin-top: 4px; letter-spacing: -.1px; }
.logout { display: flex; align-items: center; height: 36px; margin: 0 0 29px 3px; white-space: nowrap; }
.logout span { margin-left: 3px; margin-top: -4px; font-size: 23.300px; letter-spacing: 0; }
.users { width: 576px; background: #022c22; }
.users-head { height: 120px; background: #020610; display: flex; align-items: center; justify-content: center; font-size: 23px; padding-top: 2px; box-sizing: border-box; letter-spacing: -.5px; }
.user { height: 99px; box-sizing: border-box; border-bottom: 3px solid #e2ece8; display: flex; padding: 13px 12px 0 12px; font-size: 23.300px; line-height: 36px; letter-spacing: -.45px; }
.user > svg { margin-top: 15px; }
.who { margin-left: 24px; flex: 1; display: flex; flex-direction: column; }
.meta { display: flex; flex-direction: column; align-items: center; }
.meta i { width: 12px; height: 12px; border-radius: 50%; background: #22c55e; margin: 11px 0 0 4px; }

.chat { flex: 1; display: flex; flex-direction: column; }
.chat-head { height: 118px; flex: none; background: #334155; display: flex; align-items: center; justify-content: space-between; padding: 0 25px 0 24px; }
.chat-head b { font-size: 23px; margin-bottom: 7px; letter-spacing: .15px; }
.calls { display: flex; gap: 6px; }
button { border: 0; padding: 0; background: #eab308; border-radius: 14px; width: 60px; height: 64px; display: flex; align-items: center; justify-content: center; }
.calls button { padding-top: 3px; }
.thread { height: 932px; flex: none; box-sizing: border-box; background: #064e3b; padding: 13px 10px 13px 12px; }
.log { height: 906px; box-sizing: border-box; border-radius: 12px; background: #022c22; padding: 12px; display: flex; align-items: flex-start; }
.bubble { width: 229px; height: 90px; box-sizing: border-box; border-radius: 12px; background: #064e3b; padding: 17px 18px 0; display: flex; flex-direction: column; align-items: flex-end; }
.bubble p { margin: 0; font: 24.700px/34px "DejaVu Sans Mono", monospace; color: #dcebe6; }
.bubble time { font-size: 17.800px; line-height: 24px; margin-top: 4px; font-weight: 300; color: #d3e2dd; white-space: nowrap; letter-spacing: -.62px; }
.composer { height: 112px; flex: none; background: #334155; display: flex; align-items: center; padding: 0 13px 0 27px; }
.input { width: 1623px; height: 62px; border-radius: 31px; background: #fff; color: #111; display: flex; align-items: center; padding-left: 19px; box-sizing: border-box; font: 23px/30px "Liberation Sans", sans-serif; margin-top: 2px; padding-bottom: 4px; }
.input span { margin-top: -2px; }
.input svg { margin-left: 7px; }
.input i { width: 2px; height: 30px; background: #000; margin-left: -1px; }
.smile { width: 36px; height: 36px; margin-left: 15px; margin-top: 2px; }
.send { width: 129px; height: 71px; margin-left: auto; padding-top: 4px; box-sizing: border-box; }

.taskbar { height: 70px; box-sizing: border-box; border-top: 2px solid #3c3f3a; background: #21231b; display: flex; align-items: flex-start; }
.weather { position: relative; display: flex; width: 699px; padding-left: 24px; box-sizing: border-box; }
.weather > svg { margin-top: 6px; }
.weather em { position: absolute; left: 46px; top: 7px; width: 24px; font-style: normal; font-size: 16px; line-height: 24px; color: #2b1114; text-align: center; }
.wtext { margin: 10px 0 0 8px; font-size: 17.600px; line-height: 24px; display: flex; flex-direction: column; letter-spacing: .05px; }
.wtext span + span { color: #cfd0cc; }
.center { display: flex; height: 68px; }
.win { width: 36px; height: 36px; margin-top: 17px; }
.search { width: 330px; height: 48px; margin: 10px 0 0 19px; box-sizing: border-box; border: 1.500px solid #5b5c56; border-radius: 24px; background: #42433c; display: flex; align-items: center; }
.mag { width: 23px; height: 24px; margin-left: 16px; }
.search span { margin-left: 15px; width: 198px; font-size: 20px; letter-spacing: -.4px; color: #d3d4cf; }
.works { width: 74px; height: 36px; }
.apps { display: flex; margin-left: 3px; }
.cell { width: 66px; height: 68px; display: flex; flex-direction: column; align-items: center; position: relative; }
.cell svg { width: 36px; height: 36px; margin-top: 16px; }
.cell span { position: absolute; left: 15px; top: 16px; width: 36px; height: 34px; line-height: 33px; text-align: center; font-size: 19px; font-weight: 600; letter-spacing: -.5px; color: #e4f5ff; }
.cell.active { width: 60px; height: 60px; margin: 4px 3px 0; background: #2d2f28; border-radius: 7px; box-shadow: inset 0 1px #3a3c35; }
.cell.active svg { margin-top: 12px; height: 37px; }
.cell.open::after { content: ""; width: 10px; height: 5px; border-radius: 3px; background: #a0a19c; margin-top: 6px; }
.cell.active::after { content: ""; width: 22px; height: 5px; border-radius: 3px; background: #a6a7a2; margin-top: 6px; }
.snip svg { margin-top: 41px; height: 28px; }
.tray { display: flex; margin-left: auto; height: 68px; padding-right: 27px; }
.tray span { display: block; }
.up { width: 18px; height: 12px; margin-top: 28px; }
.cloud { width: 25px; height: 17px; margin: 25px 0 0 26px; }
.lang { width: 38px; margin: 11px 0 0 25px; text-align: center; font-size: 18px; line-height: 23px; letter-spacing: -.3px; }
.net { width: 24px; height: 24px; margin: 22px 0 0 27px; }
.vol { width: 24px; height: 20px; margin: 24px 0 0 12px; }
.batt { width: 24px; height: 20px; margin: 22px 0 0 12px; }
.clock { width: 117px; margin-top: 10px; text-align: right; font-size: 18px; line-height: 24px; letter-spacing: -.05px; }
.bell { width: 20px; height: 23px; margin: 22px 0 0 14px; }
.copilot { position: relative; width: 36px; margin: 17px 0 0 27px; }
.copilot svg { width: 34px; height: 32px; }
.copilot b { position: absolute; left: 8px; top: 24px; width: 27px; height: 12px; border-radius: 3px; background: #ffc810; color: #16140a; font-size: 10px; line-height: 12px; text-align: center; }
</style>
